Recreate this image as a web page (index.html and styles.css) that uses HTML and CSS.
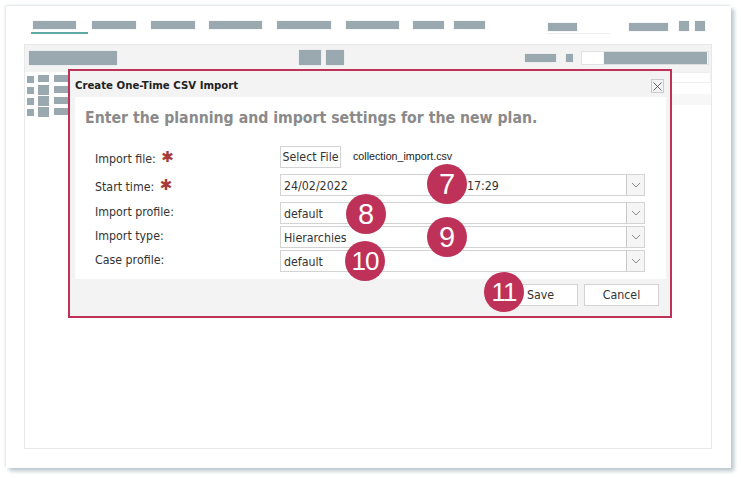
FILE: index.html
```html
<!DOCTYPE html>
<html lang="en">
<head>
<meta charset="utf-8">
<title>Create One-Time CSV Import</title>
<link rel="stylesheet" href="styles.css">
</head>
<body>
<div class="frame">
  <nav class="topnav">
    <div class="tabs">
      <div class="tab active"><i class="bar w43"></i></div>
      <div class="tab"><i class="bar w44"></i></div>
      <div class="tab tight"><i class="bar w44"></i></div>
      <div class="tab"><i class="bar w53"></i></div>
      <div class="tab"><i class="bar w54"></i></div>
      <div class="tab tight"><i class="bar w53"></i></div>
      <div class="tab near"><i class="bar w31"></i></div>
      <div class="tab"><i class="bar w31"></i></div>
    </div>
    <div class="nav-right">
      <div class="nav-search"><i class="bar w29"></i></div>
      <i class="bar w39"></i>
      <i class="bar sq10"></i>
      <i class="bar sq10 last"></i>
    </div>
  </nav>
  <section class="panel">
    <header class="panel-head">
      <i class="bar title-bar"></i>
      <div class="head-icons"><i class="bar icon-a"></i><i class="bar icon-b"></i></div>
      <div class="head-right">
        <i class="bar w31 small"></i>
        <i class="bar w7 small"></i>
        <div class="search"><i class="bar search-fill"></i></div>
      </div>
    </header>
    <div class="table">
      <div class="t-row first"><i class="c1"></i><i class="c2 flat"></i><i class="c3"></i></div>
      <div class="t-row"><i class="c1"></i><i class="c2"></i><i class="c3"></i></div>
      <div class="t-row"><i class="c1"></i><i class="c2"></i><i class="c3"></i></div>
      <div class="t-row"><i class="c1"></i><i class="c2"></i><i class="c3"></i></div>
      <div class="t-right"><div class="t-cell"></div><div class="t-stripe"></div></div>
    </div>
  </section>

  <div class="dialog">
    <div class="dialog-title">
      <span>Create One-Time CSV Import</span>
      <button class="close" type="button" aria-label="Close">
        <svg width="9" height="9" viewBox="0 0 9 9"><path d="M.5.5l8 8M8.5.5l-8 8" stroke="#666" stroke-width="1" fill="none"/></svg>
      </button>
    </div>
    <div class="dialog-body">
      <h1>Enter the planning and import settings for the new plan.</h1>
      <div class="form">
        <div class="row r-file">
          <label>Import file: <b class="req">✱</b></label>
          <button class="file-btn" type="button">Select File</button>
          <span class="file-name">collection_import.csv</span>
        </div>
        <div class="row r-start">
          <label>Start time: <b class="req">✱</b></label>
          <div class="combo"><span class="date">24/02/2022</span><span>17:29</span><span class="arrow"><svg width="10" height="6" viewBox="0 0 10 6"><path d="M1 1l4 4 4-4" stroke="#888" fill="none"/></svg></span></div>
        </div>
        <div class="row r-tight">
          <label>Import profile:</label>
          <div class="combo"><span>default</span><span class="arrow"><svg width="10" height="6" viewBox="0 0 10 6"><path d="M1 1l4 4 4-4" stroke="#888" fill="none"/></svg></span></div>
        </div>
        <div class="row r-tight">
          <label>Import type:</label>
          <div class="combo"><span>Hierarchies</span><span class="arrow"><svg width="10" height="6" viewBox="0 0 10 6"><path d="M1 1l4 4 4-4" stroke="#888" fill="none"/></svg></span></div>
        </div>
        <div class="row r-tight">
          <label>Case profile:</label>
          <div class="combo"><span>default</span><span class="arrow"><svg width="10" height="6" viewBox="0 0 10 6"><path d="M1 1l4 4 4-4" stroke="#888" fill="none"/></svg></span></div>
        </div>
      </div>
    </div>
    <div class="dialog-foot">
      <button class="btn save" type="button">Save</button>
      <button class="btn cancel" type="button">Cancel</button>
    </div>
  </div>

  <span class="badge b7">7</span>
  <span class="badge b8">8</span>
  <span class="badge b9">9</span>
  <span class="badge duo b10">10</span>
  <span class="badge duo b11">11</span>
</div>
</body>
</html>
```
FILE: styles.css
```css
* { box-sizing: border-box; }
html, body { margin: 0; padding: 0; background: #fff; }
body { width: 741px; height: 478px; overflow: hidden; font-family: "DejaVu Sans Condensed", "DejaVu Sans", sans-serif; font-size: 12.3px; color: #333; padding: 6px 0 0 6px; }
i { display: block; }
.frame { position: relative; width: 725px; height: 462px; background: #fff; box-shadow: 3px 3px 4px #b9c6cc, -1px -1px 2px #dfe5e8; padding: 15px 19px 0 18px; }
.bar { background: #9aa9af; height: 8px; box-shadow: 0 0 1px #c5ced2; flex: none; }
.w43 { width: 43px; } .w44 { width: 44px; } .w53 { width: 53px; } .w54 { width: 54px; }
.w31 { width: 31px; } .w29 { width: 29px; } .w39 { width: 39px; } .w7 { width: 7px; }
.sq10 { width: 10px; height: 10px; }
.topnav { display: flex; justify-content: space-between; height: 23px; }
.tabs { display: flex; padding-left: 9px; }
.tab { height: 12px; margin-right: 15px; }
.tab.tight { margin-right: 14px; }
.tab.near { margin-right: 10px; }
.tab.active { width: 57px; height: 13px; margin: 0 4px 0 -2px; padding-left: 2px; border-bottom: 2px solid #5fa9a4; }
.nav-right { display: flex; align-items: flex-start; padding: 0 7px 0 0; }
.nav-right .w39 { margin: 2px 11px 0 0; }
.nav-right .sq10 { margin-right: 6px; }
.nav-right .last { margin-right: 0; }
.nav-search { width: 63px; height: 11px; margin: 2px 19px 0 0; padding-left: 1px; border-bottom: 1px solid #eef0f1; }
.panel { height: 405px; border: 1px solid #e6e9ea; margin-top: 0; }
.panel-head { position: relative; height: 27px; background: #f3f3f3; display: flex; padding: 6px 2px 0 4px; }
.title-bar { width: 88px; height: 14px; }
.head-icons { display: flex; gap: 5px; margin: -1px 0 0 182px; }
.icon-a { width: 22px; height: 15px; }
.icon-b { width: 18px; height: 15px; }
.head-right { display: flex; margin-left: auto; align-items: flex-start; }
.small { margin: 3px 10px 0 0; }
.search { width: 128px; height: 14px; margin-left: -2px; background: #fff; border: 1px solid #e0e3e4; padding: 0 1px 0 22px; }
.search-fill { height: 12px; width: 103px; }
.table { position: relative; padding: 3px 0 0 2px; }
.t-row { display: flex; gap: 4px; margin-bottom: 3px; height: 8px; }
.t-row.first { margin-bottom: 3px; }
.t-row i { background: #9aa9af; }
.c1 { width: 7px; height: 7px; margin-top: 1px; }
.c2 { width: 11px; height: 10px; margin-top: -1px; }
.c2.flat { height: 7px; margin-top: 0; }
.c3 { width: 14px; height: 7px; margin-left: 1px; }
.t-right { position: absolute; left: 646px; top: 0; right: 0; }
.t-cell { height: 11px; border: 1px solid #eeeff0; border-left: 0; }
.t-stripe { height: 11px; margin-top: 11px; background: #f7f7f7; }

.dialog { position: absolute; left: 62px; top: 63px; width: 604px; height: 249px; border: 2px solid #be3158; background: #f3f3f3; display: flex; flex-direction: column; }
.dialog-title { height: 26px; display: flex; align-items: center; justify-content: space-between; padding: 2px 6px 0 5px; font-size: 11.3px; font-weight: bold; color: #222; }
.close { width: 13px; height: 14px; padding: 0; border: 1px solid #ccc; background: #f3f3f3; display: flex; align-items: center; justify-content: center; margin-top: 2px; }
.dialog-body { margin: 0 4px 0 5px; height: 182px; background: #fff; padding: 11px 0 0 10px; }
h1 { margin: 0 0 18px; font-size: 15.7px; line-height: 20px; font-weight: bold; color: #8a8a8a; white-space: nowrap; }
.form { padding-left: 10px; }
.row { display: flex; align-items: flex-start; color: #333; }
.row label { width: 185px; flex: none; padding-top: 6px; line-height: 15px; }
.r-file { height: 28px; }
.r-start { height: 28px; }
.r-tight { height: 24px; }
.r-tight label { padding-top: 3px; }
.req { color: #a83a3a; font-family: "DejaVu Sans", sans-serif; font-size: 15px; line-height: 10px; font-weight: normal; margin-left: 2px; vertical-align: 1px; }
.file-btn { width: 61px; height: 22px; font: inherit; color: #333; background: #fff; border: 1px solid #d3d3d3; padding: 0; white-space: nowrap; }
.file-name { font-family: "Liberation Sans", sans-serif; font-size: 10.7px; color: #222; margin: 4px 0 0 12px; }
.combo { width: 365px; height: 22px; border: 1px solid #d3d3d3; display: flex; align-items: center; padding: 1px 0 0 3px; position: relative; background: #fff; }
.date { width: 183px; }
.arrow { position: absolute; right: 0; top: 0; bottom: 0; width: 18px; background: #f5f5f5; border-left: 1px solid #c8c8c8; display: flex; align-items: center; justify-content: center; }
.dialog-foot { flex: 1; display: flex; justify-content: flex-end; gap: 6px; padding: 5px 11px 0 0; }
.btn { height: 22px; font: inherit; color: #333; background: #fff; border: 1px solid #d3d3d3; padding: 0; }
.save { width: 75px; }
.cancel { width: 75px; }

.badge { position: absolute; width: 40px; height: 40px; border-radius: 50%; background: #be3158; color: #fff; font-family: "Liberation Sans", sans-serif; font-size: 29px; display: flex; align-items: center; justify-content: center; }
.duo { font-size: 26px; letter-spacing: -1px; }
.b7 { left: 421px; top: 158px; }
.b8 { left: 340px; top: 188px; }
.b9 { left: 421px; top: 211px; }
.b10 { left: 339px; top: 235px; }
.b11 { left: 478px; top: 266px; }
```
